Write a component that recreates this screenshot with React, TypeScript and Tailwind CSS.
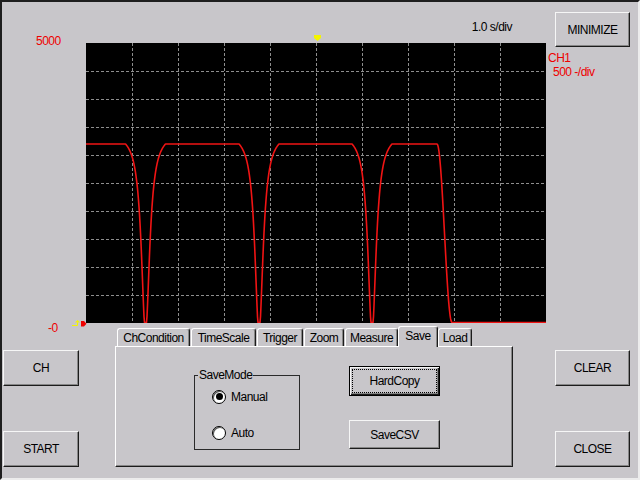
import React from "react";

// plot geometry (px inside the black area)
const PW = 460;
const PH = 280;
const HIGH = 101;
const BASE = 279.5;
const DIPS = [59.5, 173, 286];
const FALL_AT = 351;

function depth(x: number) {
  if (x >= FALL_AT + 15) return 1;
  let d = 0;
  if (x > FALL_AT) {
    const t = (x - FALL_AT) / 15;
    d = (1 - Math.cos(Math.PI * t)) / 2;
  }
  for (const c of DIPS) {
    const u = Math.abs(x - c);
    if (u < 20) {
      const l = 1 / (1 + (u / 5) ** 2);
      d = Math.max(d, Math.min(1, ((l - 1 / 17) / (1 - 1 / 17)) * 1.06));
    }
  }
  return d;
}

function tracePoints() {
  const pts: string[] = [];
  for (let x = 0; x <= PW; x += 0.5) {
    const y = HIGH + depth(x) * (BASE - HIGH);
    pts.push(`${x},${y.toFixed(2)}`);
  }
  return pts.join(" ");
}

function Scope() {
  const vx = [1, 2, 3, 4, 5, 6, 7, 8, 9].map(i => i * 46 + 0.5);
  const hy = [1, 2, 3, 4, 5, 6, 7, 8, 9].map(i => i * 28 + 0.5);
  return (
    <div className="w-[460px] h-[280px] bg-black">
      <svg width={PW} height={PH} className="block">
        {vx.map(x => (
          <line key={"v" + x} x1={x} y1={0} x2={x} y2={PH} stroke="#8e8e8e" strokeWidth={1} strokeDasharray="3 2" />
        ))}
        {hy.map(y => (
          <line key={"h" + y} x1={0} y1={y} x2={PW} y2={y} stroke="#8e8e8e" strokeWidth={1} strokeDasharray="3 2" />
        ))}
        <polyline points={tracePoints()} fill="none" stroke="#f01414" strokeWidth={1.6} strokeLinejoin="round" />
      </svg>
    </div>
  );
}

function Btn({ label, className = "" }: { label: string; className?: string }) {
  return (
    <button
      className={`flex items-center justify-center bg-[#c8c6ca] border border-t-[#f6f6f6] border-l-[#f6f6f6] border-r-[#1c1c1c] border-b-[#1c1c1c] shadow-[inset_-1px_-1px_0_#868686] text-black ${className}`}
    >
      {label}
    </button>
  );
}

function Radio({ label, checked }: { label: string; checked?: boolean }) {
  return (
    <div className="flex items-center h-[13px]">
      <span className="w-[14px] h-[14px] rounded-full bg-white border-[1.5px] border-black shadow-[inset_1px_1px_0_#5a5a5a] flex items-center justify-center">
        {checked && <span className="w-[7px] h-[7px] rounded-full bg-black" />}
      </span>
      <span className="ml-[5px] text-black">{label}</span>
    </div>
  );
}

function Tab({ label, className }: { label: string; className: string }) {
  return (
    <div
      className={`h-[18px] flex items-center justify-center border-t border-l border-t-white border-l-white border-r border-r-[#1c1c1c] shadow-[inset_-1px_0_0_#868686] rounded-t-[3px] ${className}`}
    >
      {label}
    </div>
  );
}

function SavePanel() {
  return (
    <div className="ml-[36px] w-[398px] pt-[3px] flex flex-col">
      <div className="h-[20px] flex items-end pl-[2px]">
        <Tab label="ChCondition" className="w-[73px] mr-[1px]" />
        <Tab label="TimeScale" className="w-[65px] mr-[1px]" />
        <Tab label="Trigger" className="w-[46px] mr-[1px]" />
        <Tab label="Zoom" className="w-[40px] mr-[1px]" />
        <Tab label="Measure" className="w-[53px]" />
        <div className="relative z-10 -mb-px h-[21px] w-[40px] pb-[2px] flex items-center justify-center bg-[#c8c6ca] border-t border-l border-t-white border-l-white border-r border-r-[#1c1c1c] shadow-[inset_-1px_0_0_#868686] rounded-t-[3px]">
          Save
        </div>
        <Tab label="Load" className="w-[34px]" />
      </div>
      <div className="h-[121px] flex items-start border border-t-white border-l-white border-r-[#1c1c1c] border-b-[#1c1c1c] shadow-[inset_-1px_-1px_0_#868686]">
        <div className="relative ml-[78px] mt-[28px] w-[106px] h-[75px] border border-[#2a2a2a]">
          <span className="absolute -top-[8px] left-[3px] px-[1px] bg-[#c8c6ca] text-black">SaveMode</span>
          <div className="flex flex-col pl-[17px] pt-[14px] gap-[23px]">
            <Radio label="Manual" checked />
            <Radio label="Auto" />
          </div>
        </div>
        <div className="ml-[49px] mt-[19px] flex flex-col">
          <button className="w-[91px] h-[30px] flex items-center justify-center bg-[#c8c6ca] border border-black shadow-[inset_1px_1px_0_#f6f6f6,inset_-1px_-1px_0_#1c1c1c,inset_-2px_-2px_0_#868686] outline-1 outline-dotted outline-black outline-offset-[-4px]">
            HardCopy
          </button>
          <Btn label="SaveCSV" className="mt-[24px] w-[91px] h-[29px]" />
        </div>
      </div>
    </div>
  );
}

export default function App() {
  return (
    <div className="w-[640px] h-[480px] flex flex-col overflow-hidden bg-[#c8c6ca] border-2 border-t-[#1e1e1e] border-l-[#1e1e1e] border-r-[#ececec] border-b-[#ececec] font-['Liberation_Sans',Arial,sans-serif] text-[12px] leading-[14px] tracking-[-0.5px] text-black">
      {/* scope area */}
      <div className="h-[321px] flex">
        <div className="relative w-[84px] pl-[34px] pt-[32px]">
          <div className="text-[#ee0000]">5000</div>
          <span className="absolute left-[46px] top-[319px] text-[#ee0000]">-0</span>
          <svg className="absolute left-[70px] top-[318px]" width={8} height={6}>
            <path d="M0 5.5 H5.5 V2.5" fill="none" stroke="#f4f400" strokeWidth={1} />
            <polygon points="3,2.5 8,2.5 5.5,0" fill="#f4f400" />
          </svg>
          <svg className="absolute left-[79px] top-[319px]" width={6} height={6}>
            <polygon points="0,0 3,0 5.5,2.75 3,5.5 0,5.5" fill="#ee0000" />
          </svg>
        </div>
        <div className="w-[460px] flex flex-col">
          <div className="relative h-[41px] flex justify-end pr-[34px] pt-[18px]">
            <span>1.0 s/div</span>
            <svg className="absolute left-[228px] top-[33px]" width={7} height={6}>
              <polygon points="0,0 7,0 7,3 3.5,6 0,3" fill="#f4f400" />
            </svg>
          </div>
          <Scope />
        </div>
        <div className="flex-1 flex flex-col">
          <Btn label="MINIMIZE" className="ml-[9px] mt-[10px] w-[75px] h-[35px]" />
          <div className="mt-[4px] pl-[2px] text-[#ee0000]">CH1</div>
          <div className="pl-[7px] text-[#ee0000]">500 -/div</div>
        </div>
      </div>
      {/* controls */}
      <div className="flex-1 flex">
        <div className="pl-[1px] pt-[27px] flex flex-col">
          <Btn label="CH" className="w-[76px] h-[36px]" />
          <Btn label="START" className="mt-[45px] w-[76px] h-[36px]" />
        </div>
        <SavePanel />
        <div className="ml-[42px] pt-[27px] flex flex-col">
          <Btn label="CLEAR" className="w-[75px] h-[36px]" />
          <Btn label="CLOSE" className="mt-[45px] w-[75px] h-[36px]" />
        </div>
      </div>
    </div>
  );
}
